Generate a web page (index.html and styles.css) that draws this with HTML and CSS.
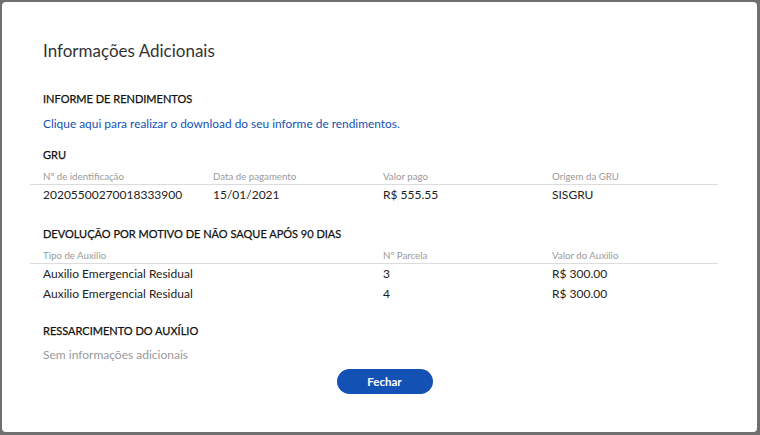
FILE: index.html
```html
<!DOCTYPE html>
<html lang="pt-BR">
<head>
<meta charset="utf-8">
<link rel="stylesheet" href="styles.css">
</head>
<body>
<div class="backdrop">
  <div class="modal">
    <h1 class="title">Informações Adicionais</h1>

    <section class="sec sec-informe">
      <h2 class="sec-title">INFORME DE RENDIMENTOS</h2>
      <a class="link" href="#">Clique aqui para realizar o download do seu informe de rendimentos.</a>
    </section>

    <section class="sec sec-gru">
      <h2 class="sec-title">GRU</h2>
      <div class="table">
        <div class="row head four">
          <span>Nº de identificação</span>
          <span>Data de pagamento</span>
          <span>Valor pago</span>
          <span>Origem da GRU</span>
        </div>
        <div class="row body four">
          <span>20205500270018333900</span>
          <span>15/01/2021</span>
          <span>R$ 555.55</span>
          <span>SISGRU</span>
        </div>
      </div>
    </section>

    <section class="sec sec-dev">
      <h2 class="sec-title">DEVOLUÇÃO POR MOTIVO DE NÃO SAQUE APÓS 90 DIAS</h2>
      <div class="table">
        <div class="row head three">
          <span>Tipo de Auxilio</span>
          <span>Nº Parcela</span>
          <span>Valor do Auxilio</span>
        </div>
        <div class="row body three">
          <span>Auxilio Emergencial Residual</span>
          <span>3</span>
          <span>R$ 300.00</span>
        </div>
        <div class="row body three">
          <span>Auxilio Emergencial Residual</span>
          <span>4</span>
          <span>R$ 300.00</span>
        </div>
      </div>
    </section>

    <section class="sec sec-ress">
      <h2 class="sec-title">RESSARCIMENTO DO AUXÍLIO</h2>
      <p class="empty">Sem informações adicionais</p>
    </section>

    <div class="actions">
      <button class="btn" type="button">Fechar</button>
    </div>
  </div>
</div>
</body>
</html>
```

FILE: styles.css
```css
* { box-sizing: border-box; }
html, body {
  margin: 0;
  padding: 0;
  width: 760px;
  height: 435px;
  overflow: hidden;
  background: #6f6f6f;
  font-family: Lato, "Open Sans", "Liberation Sans", sans-serif;
  color: #222;
}
.backdrop {
  width: 760px;
  height: 435px;
  padding: 2px 3px 3px 2px;
}
.modal {
  width: 755px;
  height: 430px;
  background: #fff;
  border-radius: 4px;
  padding: 0 0 0 41px;
}
.title {
  margin: 0;
  padding-top: 38px;
  font-size: 17px;
  font-weight: 400;
  color: #333;
  line-height: 22px;
}
.sec-title {
  margin: 0;
  font-size: 11px;
  font-weight: 400;
  color: #111;
  line-height: 16px;
  -webkit-text-stroke: 0.25px #111;
}
.sec-informe { margin-top: 29px; }
.link {
  display: block;
  margin-top: 9px;
  font-size: 11.9px;
  color: #1351b4;
  text-decoration: none;
  line-height: 16px;
}
.sec-gru { margin-top: 15px; }
.sec-dev { margin-top: 21px; }
.sec-ress { margin-top: 19px; }
.table {
  margin-left: -13px;
  width: 688px;
}
.row {
  display: grid;
  padding-left: 13px;
}
.row.four { grid-template-columns: 170px 170px 169px 1fr; }
.row.three { grid-template-columns: 340px 169px 1fr; }
.row.head {
  margin-top: 6px;
  font-size: 9.7px;
  color: #9a9a9a;
  line-height: 14px;
  padding-bottom: 1px;
  border-bottom: 1px solid #dcdcdc;
}
.row.body {
  font-size: 12px;
  color: #222;
  line-height: 20px;
}
.empty {
  margin: 8px 0 0;
  font-size: 12px;
  color: #999;
  line-height: 16px;
}
.actions {
  display: flex;
  justify-content: center;
  padding-right: 31px;
  margin-top: 6px;
}
.btn {
  width: 96px;
  height: 25px;
  border: none;
  border-radius: 13px;
  background: #1351b4;
  color: #fff;
  font-family: Lato, "Open Sans", "Liberation Sans", sans-serif;
  font-size: 11.5px;
  font-weight: 700;
  padding: 0;
}
```
